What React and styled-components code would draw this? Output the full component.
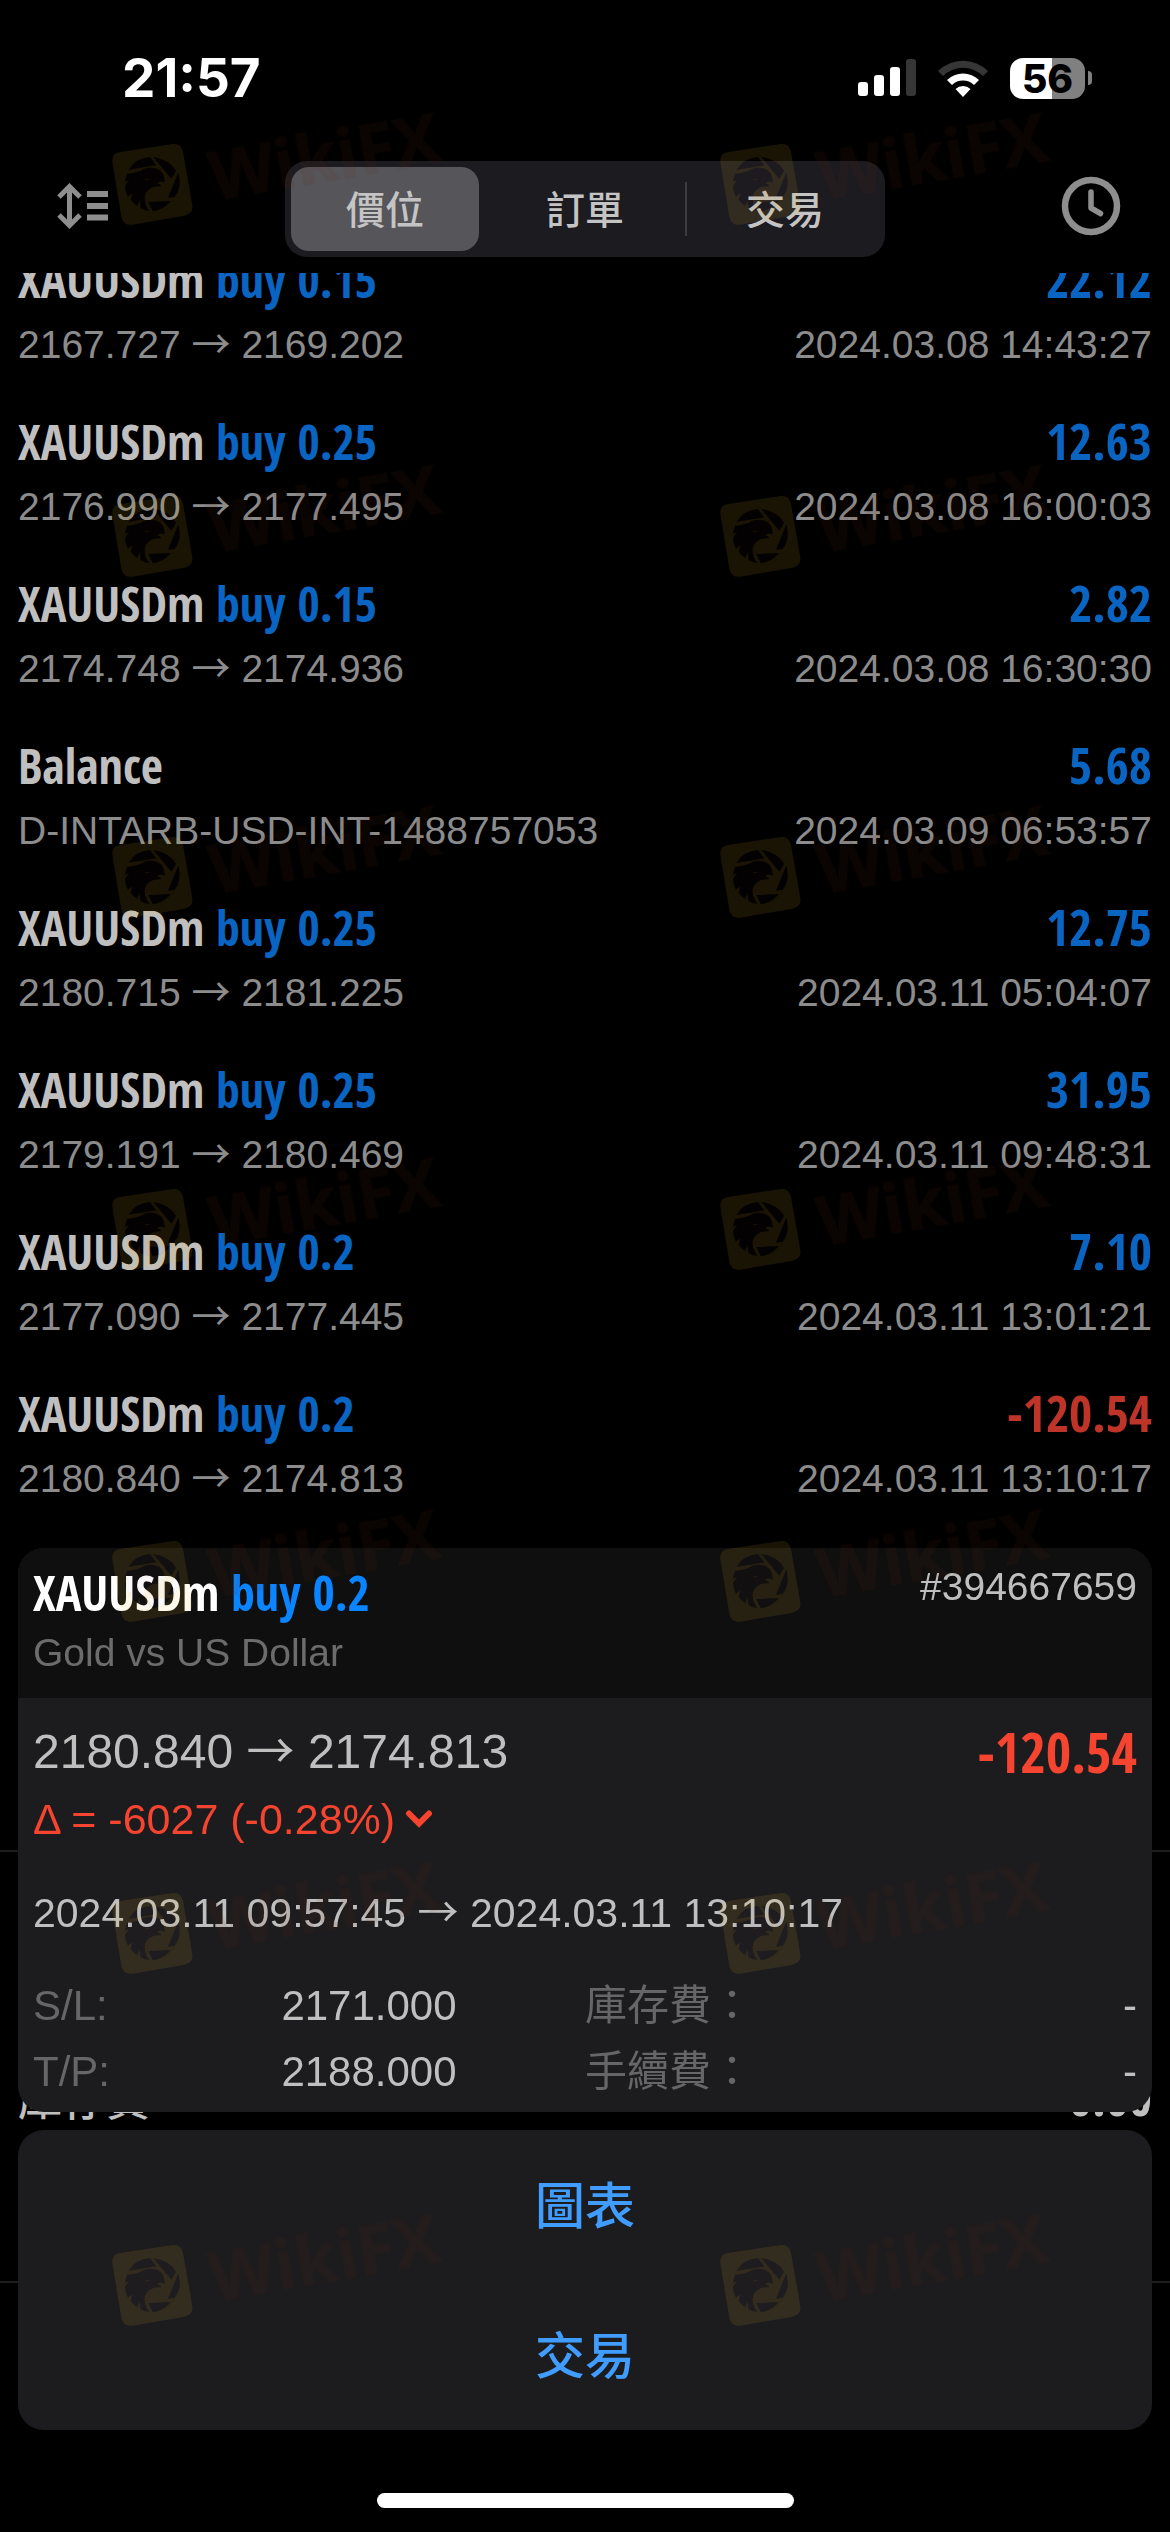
import React, { useState } from "react";
import styled, { createGlobalStyle } from "styled-components";

const sans = `"Liberation Sans", "Noto Sans CJK TC", sans-serif`;
const condensed = `"Open Sans Condensed", "Noto Sans CJK TC", sans-serif`;
const cjk = `"Noto Sans CJK TC", sans-serif`;

const tones = {
  blue: "#0a64c2",
  red: "#bf3428",
  text: "#bfbfbf",
};

const GlobalStyle = createGlobalStyle`
  * { box-sizing: border-box; }
  html, body { margin: 0; background: #000; }
  body { font-family: ${sans}; }
  button { border: 0; padding: 0; margin: 0; background: none; cursor: pointer; }
`;

const Page = styled.div`
  position: relative;
  display: flex;
  flex-direction: column;
  min-height: 100vh;
  overflow: hidden;
  background: #000;
  color: ${tones.text};
`;

const StatusBar = styled.div`
  display: flex;
  justify-content: space-between;
  align-items: center;
  height: 156px;
  padding: 0 78px 0 122px;
`;

const Clock = styled.time`
  font: 700 53px/60px Inter, sans-serif;
  color: #fff;
`;

const StatusIcons = styled.div`
  display: flex;
  align-items: center;
  gap: 22px;
`;

const Battery = styled.div`
  display: flex;
  align-items: center;
  gap: 3px;
`;

const BatteryBody = styled.span`
  width: 75px;
  height: 41px;
  border-radius: 13px;
  background: linear-gradient(90deg, #fff 56%, #808080 56%);
  font: 800 39px/41px Inter, sans-serif;
  text-align: center;
  color: #000;
`;

const BatteryCap = styled.span`
  width: 4px;
  height: 14px;
  border-radius: 0 4px 4px 0;
  background: #808080;
`;

const Toolbar = styled.nav`
  display: grid;
  grid-template-columns: 1fr minmax(0, 600px) 1fr;
  align-items: center;
  height: 117px;
  padding: 0 49px 12px;
`;

const IconButton = styled.button`
  display: flex;
  justify-self: ${(p) => p.$side};
  padding-bottom: 6px;
  color: #8e8e8e;
`;

const Segments = styled.div`
  display: grid;
  grid-template-columns: repeat(3, 1fr);
  height: 96px;
  border-radius: 22px;
  background: #1c1b20;
`;

const Segment = styled.button`
  display: flex;
  align-items: center;
  justify-content: center;
  margin: 6px;
  padding-bottom: 4px;
  border-radius: 18px;
  background: ${(p) => (p.$active ? "#565559" : "transparent")};
  font: 500 39px/56px ${cjk};
  color: #c4c4c4;
`;

const SegmentCell = styled.div`
  display: grid;
  background: ${(p) =>
    p.$divided ? "linear-gradient(#3c3b40, #3c3b40) left center / 2px 54px no-repeat" : "none"};
`;

const History = styled.main`
  display: flex;
  flex-direction: column;
  overflow: hidden;
`;

const Deals = styled.ul`
  list-style: none;
  margin: -23px 0 0;
  padding: 0 18px 304px;
  border-bottom: 2px solid #1e1e1e;
`;

const Deal = styled.li`
  display: flex;
  flex-direction: column;
  gap: 13px;
  height: 162px;
`;

const Line = styled.div`
  display: flex;
  justify-content: space-between;
  align-items: ${(p) => p.$align || "baseline"};
`;

const Title = styled.span`
  font: 700 48px/58px ${condensed};
  color: ${(p) => p.$color || tones.text};
`;

const SummaryLabel = styled.span`
  font: 500 44px/58px ${cjk};
`;

const Side = styled.span`
  color: ${(p) => p.$color || tones.blue};
`;

const Amount = styled.span`
  font: 700 ${(p) => (p.$large ? "55px" : "50px")}/58px ${condensed};
  color: ${(p) => p.$color};
`;

const Text = styled.span`
  font: 400 ${(p) => p.$size || 39}px/${(p) => p.$line || 46}px ${sans};
  color: ${(p) => p.$color || "#8c8c8c"};
`;

const ArrowGlyph = styled.span`
  font-family: ${cjk};
  font-weight: 400;
  line-height: 1;
`;

const Summary = styled.section`
  padding: 216px 18px 0;
  height: 431px;
  border-bottom: 2px solid #1e1e1e;
`;

const Sheet = styled.section`
  position: fixed;
  left: 0;
  right: 0;
  bottom: 0;
  display: flex;
  flex-direction: column;
  gap: 18px;
  padding: 0 18px;
`;

const Card = styled.article`
  border-radius: 26px;
  overflow: hidden;
  background: #1c1c1e;
`;

const CardHeader = styled.header`
  display: flex;
  flex-direction: column;
  gap: 8px;
  height: 150px;
  padding: 16px 15px 0;
  background: #0f0f0f;
`;

const CardBody = styled.div`
  display: flex;
  flex-direction: column;
  padding: 25px 15px 7px;
`;

const Change = styled.div`
  display: flex;
  align-items: center;
  gap: 10px;
  height: 76px;
  color: #f5442f;
`;

const Period = styled.div`
  display: flex;
  padding: 32px 0 37px;
`;

const Details = styled.dl`
  display: grid;
  grid-template-columns: 9fr 11fr 20fr;
  margin: 0;
`;

const Pair = styled.div`
  display: contents;
`;

const Split = styled.div`
  display: flex;
  justify-content: space-between;
`;

const Term = styled.dt`
  font: 400 42px/66px ${sans};
  color: #666668;
`;

const Value = styled.dd`
  margin: 0;
  font: 400 42px/66px ${sans};
  color: ${tones.text};
`;

const Actions = styled.div`
  display: grid;
  border-radius: 26px;
  background: #1c1c1e;
`;

const Action = styled.button`
  height: 150px;
  padding-bottom: 6px;
  font: 500 50px/72px ${cjk};
  color: #409cff;
`;

const HomeArea = styled.div`
  display: flex;
  justify-content: center;
  height: 84px;
  padding-top: 45px;
`;

const HomeBar = styled.span`
  width: 417px;
  height: 15px;
  border-radius: 8px;
  background: #fff;
`;

const WatermarkLayer = styled.div`
  position: absolute;
  inset: 0;
  z-index: 2;
  display: grid;
  grid-template-columns: 608px 1fr;
  grid-template-rows: 352px 341px repeat(5, 352px);
  padding: 100px 0 0 100px;
  overflow: hidden;
  pointer-events: none;
`;

const SignalIcon = () => (
  <svg width="58" height="38" viewBox="0 0 58 38" aria-hidden="true">
    <rect x="0" y="23" width="10" height="14" rx="3" fill="#fff" />
    <rect x="16" y="16" width="10" height="21" rx="3" fill="#fff" />
    <rect x="32" y="8" width="10" height="29" rx="3" fill="#fff" />
    <rect x="48" y="0" width="10" height="37" rx="3" fill="#363636" />
  </svg>
);

const WifiIcon = () => (
  <svg width="50" height="37" viewBox="0 0 50 37" aria-hidden="true">
    <path d="M0 11 A35.500 35.500 0 0 1 50 11 L45 16 A28.500 28.500 0 0 0 5 16 Z" fill="#363636" />
    <path d="M9 20 A23 23 0 0 1 41 20 L36 25 A16 16 0 0 0 14 25 Z" fill="#fff" />
    <path d="M17.500 29 A11 11 0 0 1 32.500 29 L25 37 Z" fill="#fff" />
  </svg>
);

const SortIcon = () => (
  <svg width="60" height="46" viewBox="0 0 60 46" aria-hidden="true">
    <g transform="translate(8 0)" fill="none" stroke="currentColor">
      <path d="M12.500 3V43M2 14 12.500 3.500 23 14M2 32 12.500 42.500 23 32" strokeWidth="5" />
      <path d="M30 11H51M30 23H51M30 34.500H51" strokeWidth="6" />
    </g>
  </svg>
);

const ClockIcon = () => (
  <svg width="60" height="60" viewBox="0 0 60 60" fill="none" stroke="currentColor" aria-hidden="true">
    <circle cx="30" cy="30" r="26" strokeWidth="6.500" />
    <path d="M30 16V32L39.500 37.500" strokeWidth="5.500" strokeLinecap="round" strokeLinejoin="round" />
  </svg>
);

const ChevronIcon = () => (
  <svg width="28" height="20" viewBox="0 0 28 20" fill="none" aria-hidden="true">
    <path d="M4 4.500 14 14.500 24 4.500" stroke="currentColor" strokeWidth="6" strokeLinecap="round" />
  </svg>
);

const Watermark = () => (
  <svg width="350" height="140" viewBox="0 0 350 140" aria-hidden="true">
    <g fillRule="evenodd" transform="scale(0.3333)">
      <path
        fill="#fac328"
        fillOpacity="0.1"
        d="M60 156 218 132Q244 129 249 155L277 315Q281 341 254 347L98 374Q70 378 64 350L37 186Q34 160 60 156Z
           M86 209Q108 174 150 171L169 196Z
           M160 171Q206 178 228 212L214 236Z
           M235 218Q247 264 223 291L204 293Z
           M213 303Q192 328 159 334L145 306Z
           M82 221Q122 217 132 206Q166 198 184 215Q193 225 194 248Q184 240 170 249Q182 251 184 259Q148 256 136 282Q128 306 148 333Q132 332 122 324L118 300 112 318Q98 310 92 298L98 278 84 290Q74 272 76 256L88 240 76 246Q76 232 82 221Z
           M133 234Q148 242 154 233L146 240Q138 242 133 234Z"
      />
      <circle cx="156" cy="252" r="82" fill="#6e2814" fillOpacity="0.03" />
    </g>
    <text
      x="114"
      y="101"
      transform="rotate(-10 114 101)"
      fontFamily="Open Sans, sans-serif"
      fontWeight="700"
      fontSize="68"
      fill="#6e2814"
      fillOpacity="0.09"
      stroke="#6e2814"
      strokeOpacity="0.04"
      strokeWidth="3"
      strokeLinejoin="round"
    >
      WikiFX
    </text>
  </svg>
);

const deals = [
  { name: "XAUUSDm", side: "buy 0.15", amount: "22.12", from: "2167.727", to: "2169.202", time: "2024.03.08 14:43:27" },
  { name: "XAUUSDm", side: "buy 0.25", amount: "12.63", from: "2176.990", to: "2177.495", time: "2024.03.08 16:00:03" },
  { name: "XAUUSDm", side: "buy 0.15", amount: "2.82", from: "2174.748", to: "2174.936", time: "2024.03.08 16:30:30" },
  { name: "Balance", amount: "5.68", note: "D-INTARB-USD-INT-1488757053", time: "2024.03.09 06:53:57" },
  { name: "XAUUSDm", side: "buy 0.25", amount: "12.75", from: "2180.715", to: "2181.225", time: "2024.03.11 05:04:07" },
  { name: "XAUUSDm", side: "buy 0.25", amount: "31.95", from: "2179.191", to: "2180.469", time: "2024.03.11 09:48:31" },
  { name: "XAUUSDm", side: "buy 0.2", amount: "7.10", from: "2177.090", to: "2177.445", time: "2024.03.11 13:01:21" },
  { name: "XAUUSDm", side: "buy 0.2", amount: "-120.54", from: "2180.840", to: "2174.813", time: "2024.03.11 13:10:17" },
];

const Range = ({ from, to }) => (
  <>
    {from} <ArrowGlyph>→</ArrowGlyph> {to}
  </>
);

const tabs = ["價位", "訂單", "交易"];

export default function App() {
  const [tab, setTab] = useState(0);

  return (
    <Page>
      <GlobalStyle />
      <StatusBar>
        <Clock>21:57</Clock>
        <StatusIcons>
          <SignalIcon />
          <WifiIcon />
          <Battery>
            <BatteryBody>56</BatteryBody>
            <BatteryCap />
          </Battery>
        </StatusIcons>
      </StatusBar>

      <Toolbar>
        <IconButton $side="start" aria-label="排序">
          <SortIcon />
        </IconButton>
        <Segments>
          {tabs.map((label, i) => (
            <SegmentCell key={label} $divided={i > 1 && tab < i - 1}>
              <Segment $active={tab === i} aria-pressed={tab === i} onClick={() => setTab(i)}>
                {label}
              </Segment>
            </SegmentCell>
          ))}
        </Segments>
        <IconButton $side="end" aria-label="時段">
          <ClockIcon />
        </IconButton>
      </Toolbar>

      <History>
        <Deals>
          {deals.map((d) => (
            <Deal key={d.time}>
              <Line>
                <Title>
                  {d.name} {d.side && <Side>{d.side}</Side>}
                </Title>
                <Amount $color={d.amount.startsWith("-") ? tones.red : tones.blue}>{d.amount}</Amount>
              </Line>
              <Line>
                <Text>{d.note || <Range from={d.from} to={d.to} />}</Text>
                <Text as="time">{d.time}</Text>
              </Line>
            </Deal>
          ))}
        </Deals>
        <Summary>
          <Line>
            <SummaryLabel>庫存費</SummaryLabel>
            <Amount $color={tones.text}>0.00</Amount>
          </Line>
        </Summary>
      </History>

      <Sheet>
        <Card>
          <CardHeader>
            <Line $align="flex-start">
              <Title $color="#fff">
                XAUUSDm <Side $color="#0a84ff">buy 0.2</Side>
              </Title>
              <Text $color={tones.text}>#394667659</Text>
            </Line>
            <Text $color="#6c6c6c">Gold vs US Dollar</Text>
          </CardHeader>
          <CardBody>
            <Line $align="flex-start">
              <Text $size={48} $line={58} $color={tones.text}>
                <Range from="2180.840" to="2174.813" />
              </Text>
              <Amount $large $color="#f5442f">-120.54</Amount>
            </Line>
            <Change>
              <Text $size={43} $color="inherit">Δ = -6027 (-0.28%)</Text>
              <ChevronIcon />
            </Change>
            <Period>
              <Text $size={41} $color={tones.text}>
                <Range from="2024.03.11 09:57:45" to="2024.03.11 13:10:17" />
              </Text>
            </Period>
            <Details>
              <Pair>
                <Term>S/L:</Term>
                <Value>2171.000</Value>
              </Pair>
              <Split>
                <Term>庫存費：</Term>
                <Value>-</Value>
              </Split>
              <Pair>
                <Term>T/P:</Term>
                <Value>2188.000</Value>
              </Pair>
              <Split>
                <Term>手續費：</Term>
                <Value>-</Value>
              </Split>
            </Details>
          </CardBody>
        </Card>
        <Actions>
          <Action>圖表</Action>
          <Action>交易</Action>
        </Actions>
        <HomeArea>
          <HomeBar />
        </HomeArea>
      </Sheet>

      <WatermarkLayer aria-hidden="true">
        {Array.from({ length: 14 }, (_, i) => (
          <Watermark key={i} />
        ))}
      </WatermarkLayer>
    </Page>
  );
}
